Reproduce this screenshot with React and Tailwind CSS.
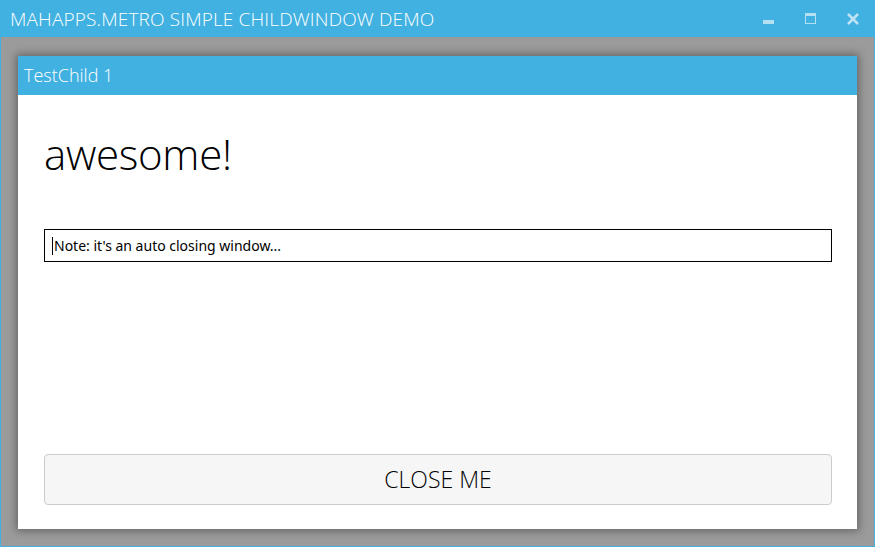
import React from 'react'

function TitleButtons() {
  return (
    <div className="flex items-center h-full">
      {/* minimize */}
      <div className="w-[42px] h-full flex items-center justify-center">
        <svg width="12" height="12" viewBox="0 0 12 12">
          <rect x="0" y="7" width="11" height="4" fill="#ffffff" fillOpacity="0.6" />
        </svg>
      </div>
      {/* maximize */}
      <div className="w-[42px] h-full flex items-center justify-center">
        <svg width="12" height="12" viewBox="0 0 12 12">
          <path d="M0 0h11v11H0z M1 3v7h9V3z" fill="#ffffff" fillOpacity="0.6" fillRule="evenodd" />
        </svg>
      </div>
      {/* close */}
      <div className="w-[42px] h-full flex items-center justify-center">
        <svg width="14" height="14" viewBox="0 0 14 14">
          <path d="M2 2L12 12M12 2L2 12" stroke="#ffffff" strokeOpacity="0.65" strokeWidth="2.6" />
        </svg>
      </div>
    </div>
  )
}

export default function App() {
  return (
    <div
      className="w-[875px] h-[547px] flex flex-col border border-[#41b1e1] bg-[#9b9b9b] overflow-hidden"
      style={{ fontFamily: '"Open Sans", "Noto Sans", sans-serif' }}
    >
      {/* main title bar */}
      <div className="h-[36px] bg-[#41b1e1] flex items-center justify-between shrink-0">
        <div className="pl-[9px] text-white text-[19px] font-light tracking-[0.15px] leading-none">
          MAHAPPS.METRO SIMPLE CHILDWINDOW DEMO
        </div>
        <div className="h-full">
          <TitleButtons />
        </div>
      </div>

      {/* overlay area */}
      <div className="flex-1 pt-[19px] pl-[17px] pr-[17px] pb-[17px]">
        <div className="h-full bg-white flex flex-col shadow-[0_0_8px_2px_rgba(0,0,0,0.35)]">
          <div className="h-[39px] bg-[#41b1e1] flex items-center pl-[6px] text-white text-[18px] font-light shrink-0">
            TestChild 1
          </div>
          <div className="flex-1 flex flex-col pl-[26px] pr-[25px] pt-[38px] pb-[24px]">
            <div className="text-[42px] font-light text-black leading-none tracking-[-0.3px]">awesome!</div>
            <div className="mt-[54px] h-[33px] border-[1.5px] border-black flex items-center pl-[7px]">
              <span className="w-px h-[18px] bg-black mr-px" />
              <span className="text-[14px] text-black" style={{ fontFamily: '"Noto Sans", sans-serif' }}>
                Note: it's an auto closing window...
              </span>
            </div>
            <div className="flex-1" />
            <button className="h-[51px] w-full bg-[#f6f6f6] border border-[#cccccc] rounded-[4px] text-[23px] font-light text-black">
              CLOSE ME
            </button>
          </div>
        </div>
      </div>
    </div>
  )
}
